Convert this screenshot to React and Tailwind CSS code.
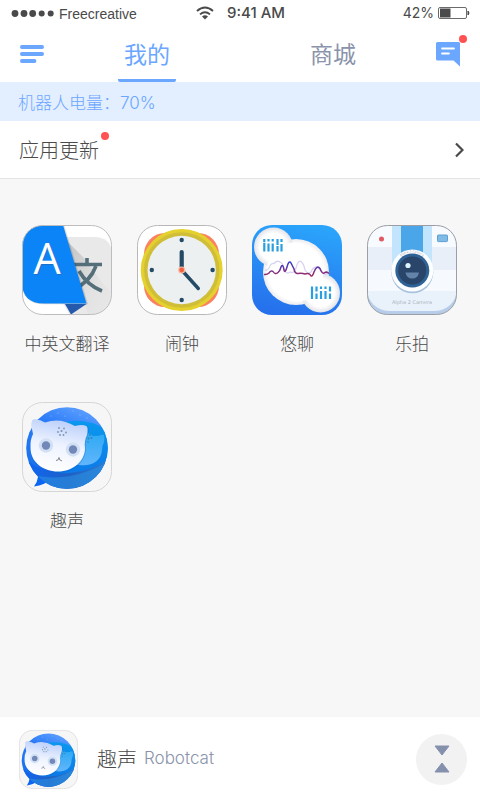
import { useId, useState } from 'react';

const TranslateIcon = ({ className }) => {
  const id = useId();
  return (
    <svg viewBox="0 0 90 90" className={className} aria-hidden="true">
      <defs>
        <clipPath id={`${id}-clip`}>
          <rect x="0.5" y="0.5" width="89" height="89" rx="20" />
        </clipPath>
        <linearGradient id={`${id}-fold`} x1="0" y1="0" x2="1" y2="1">
          <stop offset="0" stopColor="#a9a9a9" />
          <stop offset="0.6" stopColor="#dedede" />
          <stop offset="1" stopColor="#e8e8e8" />
        </linearGradient>
      </defs>
      <g clipPath={`url(#${id}-clip)`}>
        <rect width="90" height="90" fill="#ffffff" />
        <path d="M30 12 H72 Q90 12 90 30 V90 H48 L30 60 Z" fill="#e9e9e9" />
        <path d="M46 17 L62 33 L82 60 L90 68 V90 H66 Z" fill={`url(#${id}-fold)`} opacity="0.6" />
        {/* wen character strokes */}
        <g stroke="#546e7a" strokeWidth="3.6" fill="none">
          <path d="M65 33 V39" />
          <path d="M52 39.5 H80" />
          <path d="M74 41 Q68 57 52 64" />
          <path d="M57 46 Q65 60 80 66" />
        </g>
        <path d="M42.2 0 L66 79.3 H22 Q0 79.3 0 57 V0 Z" fill="#000000" opacity="0.14" />
        <path d="M41 0 L64.5 78.5 H22 Q0 78.5 0 57 V0 Z" fill="#0a84f6" />
        <path d="M43 79 H64.5 L49 89.5 Z" fill="#2559ac" />
        <g textAnchor="middle" fontSize="43" fontWeight="400" fontFamily='"Open Sans", sans-serif'>
          <text x="26" y="50" fill="#2c5f9e" opacity="0.5">
            A
          </text>
          <text x="25" y="49" fill="#ffffff">
            A
          </text>
        </g>
      </g>
      <rect x="0.5" y="0.5" width="89" height="89" rx="20" fill="none" stroke="#bdbdbd" />
    </svg>
  );
};

const ClockIcon = ({ className }) => (
  <svg viewBox="0 0 90 90" className={className} aria-hidden="true">
    <rect x="0.5" y="0.5" width="89" height="89" rx="20" fill="#ffffff" stroke="#b8b8b8" />
    <rect x="7" y="8" width="75" height="74" rx="21" fill="#fb8161" />
    <circle cx="44.7" cy="45" r="41" fill="#e4d12e" />
    <circle cx="44.7" cy="45" r="37.8" fill="#d0be38" />
    <circle cx="44.7" cy="45" r="34.2" fill="#ecf0f1" />
    <g fill="#244a66">
      <circle cx="44.7" cy="15" r="2.2" />
      <circle cx="44.7" cy="75" r="2.2" />
      <circle cx="14.8" cy="45" r="2.2" />
      <circle cx="75.6" cy="45" r="2.2" />
    </g>
    <g stroke="#244a66" strokeLinecap="round">
      <path d="M44.7 27 V44" strokeWidth="4.2" />
      <path d="M46 46.5 L61.3 63.5" strokeWidth="3.4" />
    </g>
    <circle cx="44.7" cy="45" r="3.6" fill="#f9b9a5" />
    <circle cx="44.7" cy="45" r="2.4" fill="#f2643f" />
  </svg>
);

const ChatWaveIcon = ({ className }) => {
  const id = useId();
  return (
    <svg viewBox="0 0 90 90" className={className} aria-hidden="true">
      <defs>
        <linearGradient id={`${id}-bg`} x1="0.6" y1="0" x2="0.4" y2="1">
          <stop offset="0" stopColor="#2aa4fb" />
          <stop offset="1" stopColor="#2670ec" />
        </linearGradient>
        <radialGradient id={`${id}-ball`}>
          <stop offset="0.84" stopColor="#ffffff" />
          <stop offset="1" stopColor="#ececf0" />
        </radialGradient>
        <radialGradient id={`${id}-small`}>
          <stop offset="0.7" stopColor="#ffffff" />
          <stop offset="1" stopColor="#e2e3e8" />
        </radialGradient>
        <linearGradient id={`${id}-wave`} gradientUnits="userSpaceOnUse" x1="0" y1="37" x2="0" y2="52">
          <stop offset="0" stopColor="#3340d0" />
          <stop offset="1" stopColor="#a8285c" />
        </linearGradient>
      </defs>
      <rect width="90" height="90" rx="20" fill={`url(#${id}-bg)`} />
      <circle cx="44" cy="47" r="33" fill={`url(#${id}-ball)`} />
      <circle cx="21.5" cy="22" r="19.5" fill={`url(#${id}-small)`} />
      <circle cx="68.5" cy="68" r="19.5" fill={`url(#${id}-small)`} />
      {/* hides the rims where the three balls join */}
      <path d="M22 12 L35 19 Q50 14 62 27 Q76 40 70 54 L82 66 L68 80 L54 75 Q40 80 28 70 Q12 58 16 36 L10 26 Z" fill="#ffffff" />
      <path
        d="M13 45 Q15 46 17 43 Q19 38 22 38.5 Q25 35 28 37 Q31 38 32 44 Q34 50 38 47 Q42 49 44 43 Q46 35 49 36.5 Q52 39 53 45 Q56 50 59 47 Q61 42 65 42 Q68 44 71 48 Q74 51 77 47"
        fill="none"
        stroke="#d9d3f1"
        strokeWidth="1.3"
      />
      <path
        d="M12 49.5 Q15 50 17 48 Q19 45 21 46.5 Q23 50 26 47.5 Q28 46 29 42 Q31 38 32 45 Q33 49 35 42 Q37 34.5 39 38 Q41 42 42 44 Q43 49 46 48.5 Q50 48 53 49 Q56 48 58 49.5 Q60 53.5 62 47 Q65 39.5 68 43.5 Q70 49 72 48 Q75 46 77 48.5"
        fill="none"
        stroke={`url(#${id}-wave)`}
        strokeWidth="1.5"
      />
      <g fill="none" stroke="#2b9ede" strokeWidth="2.2">
        <path d="M12.3 14 V26.5" strokeDasharray="3 0.8 9" />
        <path d="M16.5 14 V26.5" strokeDasharray="2.4 2 9" />
        <path d="M20.7 14 V26.5" strokeDasharray="2.4 2 9" />
        <path d="M25.5 14 V26.5" strokeDasharray="6 1 6" />
        <path d="M29.5 14 V26.5" strokeDasharray="3 2 9" />
        <path d="M60 61.5 V74" />
        <path d="M64.5 61.5 V74" strokeDasharray="5 2 6" />
        <path d="M69 61.5 V74" strokeDasharray="2.4 2 9" />
        <path d="M73.5 61.5 V74" strokeDasharray="2.4 2 9" />
        <path d="M78 61.5 V74" strokeDasharray="5 2 6" />
      </g>
    </svg>
  );
};

const CameraIcon = ({ className }) => {
  const id = useId();
  return (
    <svg viewBox="0 0 90 90" className={className} aria-hidden="true">
      <defs>
        <clipPath id={`${id}-clip`}>
          <rect x="0.5" y="0.5" width="89" height="89" rx="20" />
        </clipPath>
        <path id={`${id}-arc`} d="M27.5 45 A17.5 17.5 0 0 1 62.5 45" />
      </defs>
      <g clipPath={`url(#${id}-clip)`}>
        <rect width="90" height="90" fill="#b7cdea" />
        <rect y="-20" width="90" height="106" rx="22" fill="#e9f1fb" />
        <rect width="90" height="22" fill="#f7fafe" />
        <rect y="22" width="90" height="23" fill="#e9eff8" />
        <rect y="45" width="90" height="21" fill="#f6f9fe" />
        <rect x="25" width="40" height="45" fill="#c2e4fd" />
        <rect x="34" width="22" height="35" fill="#4ba5e9" />
        <circle cx="14.5" cy="14" r="2.5" fill="#e05a62" />
        <rect x="70.5" y="10" width="10" height="6.6" rx="0.8" fill="#7fbbe4" stroke="#5e9fd2" />
        <circle cx="45.3" cy="47.3" r="21" fill="#a9c2dd" />
        <circle cx="45.3" cy="45.5" r="21" fill="#fdfeff" />
        <circle cx="45.3" cy="45.5" r="17" fill="#2f6295" />
        <circle cx="45.3" cy="45.5" r="14" fill="#29456a" />
        <circle cx="41" cy="40.5" r="2.6" fill="#ddf3ff" />
        <path d="M38.5 47.5 H52 Q51 53.5 45.3 53.5 Q39.5 53.5 38.5 47.5 Z" fill="#6483a8" />
        <g fill="#aeb4be" fontWeight="400" fontFamily='"DejaVu Sans", sans-serif'>
          <text fontSize="3">
            <textPath href={`#${id}-arc`} startOffset="50%" textAnchor="middle">
              Alpha 2 Camera
            </textPath>
          </text>
          <text x="45" y="79" textAnchor="middle" fontSize="5">
            Alpha 2 Camera
          </text>
        </g>
      </g>
      <rect x="0.5" y="0.5" width="89" height="89" rx="20" fill="none" stroke="#9b9fa5" />
    </svg>
  );
};

const CatIcon = ({ className }) => {
  const id = useId();
  return (
    <svg viewBox="0 0 90 90" className={className} aria-hidden="true">
      <defs>
        <linearGradient id={`${id}-ball`} x1="0.7" y1="0" x2="0.3" y2="1">
          <stop offset="0" stopColor="#5ea0ff" />
          <stop offset="0.3" stopColor="#2b7cf8" />
          <stop offset="1" stopColor="#146fea" />
        </linearGradient>
        <linearGradient id={`${id}-sea`} x1="0" y1="0" x2="0" y2="1">
          <stop offset="0" stopColor="#0a98ee" />
          <stop offset="1" stopColor="#0b7ae8" />
        </linearGradient>
        <linearGradient id={`${id}-deep`} x1="0" y1="0" x2="1" y2="0">
          <stop offset="0" stopColor="#0d66f5" />
          <stop offset="0.5" stopColor="#2060c4" />
          <stop offset="1" stopColor="#2a80d8" />
        </linearGradient>
        <linearGradient id={`${id}-back`} x1="0" y1="0" x2="0" y2="1">
          <stop offset="0" stopColor="#2ba9f3" />
          <stop offset="1" stopColor="#62b6fb" />
        </linearGradient>
        <linearGradient id={`${id}-face`} x1="0.6" y1="0" x2="0.4" y2="1">
          <stop offset="0" stopColor="#b9cefb" />
          <stop offset="0.5" stopColor="#eef3ff" />
          <stop offset="1" stopColor="#ffffff" />
        </linearGradient>
        <clipPath id={`${id}-clip`}>
          <circle cx="45" cy="46" r="40.8" />
        </clipPath>
      </defs>
      <rect x="0.5" y="0.5" width="89" height="89" rx="20" fill="#f6f6f6" stroke="#d6d6d6" />
      <path d="M14 66 Q19 75 12 84.5 Q23 83 29 77 Z" fill="#0b66f3" />
      <circle cx="45" cy="46" r="40.8" fill={`url(#${id}-ball)`} />
      <g clipPath={`url(#${id}-clip)`}>
        <path d="M36 22 Q66 12 90 32 V72 H36 Z" fill={`url(#${id}-sea)`} />
        <path d="M4 58 Q24 73 48 71 Q72 69 90 54 V90 H4 Z" fill={`url(#${id}-deep)`} />
        <path d="M16 74 Q50 80 86 60 L66 90 H26 Z" fill="#2c8fe0" opacity="0.6" />
      </g>
      <path d="M58 31 Q66 29 71 34 Q77 34 81 32.5 Q83 33 82 40 Q80 44 80 48 C79 60 68 66 52 62 Z" fill={`url(#${id}-back)`} />
      <g fill="#a8cbff" opacity="0.8">
        <circle cx="29" cy="14" r="0.6" />
        <circle cx="36" cy="11" r="0.6" />
        <circle cx="43" cy="14" r="0.6" />
        <circle cx="51" cy="9" r="0.6" />
        <circle cx="58" cy="13" r="0.6" />
        <circle cx="65" cy="16" r="0.6" />
      </g>
      <g fill="#3a7fb4">
        <circle cx="68" cy="33" r="0.9" />
        <circle cx="66.5" cy="36.5" r="1" />
        <circle cx="69.5" cy="36" r="0.9" />
        <circle cx="66" cy="40" r="0.8" />
      </g>
      <path
        d="M12 17.5 Q18 17 23 20.5 Q38 15 53 24 Q60 22 65.5 24 Q67.5 26 66 33 Q63 39 64 46 C64 60 52 71 37 71 C21 71 8 62 8 46 Q8 38 11 32 Q9 24 10 19 Q10.5 17.5 12 17.5 Z"
        fill="#0655c2"
        opacity="0.25"
      />
      <path
        d="M12 17.5 Q18 17 23 20.5 Q38 15 53 24 Q60 22 64.5 24 Q66.5 26 65 33 Q62 39 63 46 C63 59 51 69.5 36 69.5 C21 69.5 8.5 60 8.5 46 Q8 38 11 32 Q9 24 10 19 Q10.5 17.5 12 17.5 Z"
        fill={`url(#${id}-face)`}
      />
      <g fill="#7b93b2">
        <circle cx="37" cy="26" r="0.9" />
        <circle cx="42" cy="26.5" r="0.9" />
        <circle cx="39.5" cy="29" r="1.1" />
        <circle cx="36" cy="30" r="0.9" />
        <circle cx="44" cy="30.5" r="0.9" />
        <circle cx="38" cy="33" r="0.9" />
        <circle cx="41.5" cy="33" r="0.9" />
      </g>
      <circle cx="24" cy="43.5" r="7.2" fill="#d2e0f3" />
      <circle cx="24" cy="43.5" r="4.2" fill="#7188b8" />
      <circle cx="51" cy="47.5" r="7.2" fill="#d2e0f3" />
      <circle cx="51" cy="47.5" r="4.2" fill="#7188b8" />
      <path d="M34 58.5 Q37 58.5 37 55.5 Q37 58.5 40 59" fill="none" stroke="#74787f" strokeWidth="0.9" />
    </svg>
  );
};

const apps = [
  { name: '中英文翻译', Icon: TranslateIcon },
  { name: '闹钟', Icon: ClockIcon },
  { name: '悠聊', Icon: ChatWaveIcon },
  { name: '乐拍', Icon: CameraIcon },
  { name: '趣声', Icon: CatIcon },
];

const tabs = ['我的', '商城'];

const StatusBar = () => (
  <div className="grid h-7 grid-cols-[1fr_auto_1fr] items-center pr-[10px] pl-[11px] text-[#4a4a4a]">
    <div className="flex items-center gap-1">
      <svg viewBox="0 0 44 8" className="h-2 w-11" fill="currentColor" aria-hidden="true">
        <circle cx="4" cy="3.5" r="3.4" />
        <circle cx="13" cy="3.5" r="3.4" />
        <circle cx="21.7" cy="3.5" r="3.4" />
        <circle cx="30.7" cy="3.5" r="3" />
        <circle cx="39.7" cy="3.5" r="3" />
      </svg>
      <span className="font-['Liberation_Sans',sans-serif] text-sm font-normal">Freecreative</span>
    </div>
    <div className="flex items-center gap-[13px] pb-[2px]">
      <svg viewBox="0 0 18 14" className="h-[14px] w-[18px]" fill="none" stroke="currentColor" strokeWidth="1.9" aria-hidden="true">
        <path d="M1 5 Q9 -2 17 5" />
        <path d="M4 8.4 Q9 4 14 8.4" />
        <path d="M6 10.5 Q9 7.8 12 10.5 L9 13.5 Z" fill="currentColor" stroke="none" />
      </svg>
      <span className="text-[15px] font-medium">9:41 AM</span>
    </div>
    <div className="flex items-center justify-end gap-1 pb-[2px]">
      <span className="text-sm font-normal">42%</span>
      <svg viewBox="0 0 32 12" className="h-3 w-8" aria-hidden="true">
        <rect x="0.5" y="0.5" width="28" height="11" rx="1.5" fill="none" stroke="#6a6a6a" />
        <rect x="2" y="1.5" width="10.5" height="9" fill="#4a4a4a" />
        <path d="M30 4 Q32 6 30 8 Z" fill="#4a4a4a" stroke="#4a4a4a" />
      </svg>
    </div>
  </div>
);

const Header = () => {
  const [active, setActive] = useState(tabs[0]);

  return (
    <header className="flex h-[54px] items-center px-5">
      <button type="button" aria-label="菜单">
        <svg viewBox="0 0 24 20" className="h-5 w-6" stroke="#6ba6ff" strokeWidth="3.8" strokeLinecap="round" aria-hidden="true">
          <path d="M1.9 2 H22.1 M1.9 9 H22.1 M1.9 16 H14.5" />
        </svg>
      </button>
      <nav className="mx-[10px] grid h-full flex-1 grid-cols-2 justify-items-center">
        {tabs.map((tab) => (
          <button
            key={tab}
            type="button"
            onClick={() => setActive(tab)}
            className={
              tab === active
                ? 'h-full w-[58px] rounded-xs border-b-3 border-[#6ba6ff] pt-[3px] text-[23px] font-normal text-[#6ba6ff]'
                : 'h-full w-[58px] rounded-xs border-b-3 border-transparent pt-[3px] text-[23px] font-normal text-[#8a93ab]'
            }
          >
            {tab}
          </button>
        ))}
      </nav>
      <button type="button" aria-label="消息" className="relative">
        <svg viewBox="0 0 24 26" className="h-[26px] w-6" aria-hidden="true">
          <path d="M1.5 0 H22.5 Q24 0 24 1.5 V24.5 L17.5 18.5 H1.5 Q0 18.5 0 17 V1.5 Q0 0 1.5 0 Z" fill="#6ba6ff" />
          <path d="M6.2 6.5 H17.8 M6.2 11.5 H12.8" stroke="#ffffff" strokeWidth="2.2" strokeLinecap="round" />
        </svg>
        <span className="absolute -top-[7px] -right-[7px] h-2 w-2 rounded-full bg-[#ff5252]" />
      </button>
    </header>
  );
};

const App = () => {
  return (
    <div className="flex min-h-screen flex-col bg-[#f7f7f7] font-[Inter,'Noto_Sans_CJK_SC',sans-serif] font-light text-[#4a4a4a]">
      <div className="bg-white">
        <StatusBar />
        <Header />
        <p className="bg-[#e3efff] px-[18px] pt-[9px] pb-[6px] text-[17px] leading-6 text-[#6ba6ff]">机器人电量：70%</p>
        <a href="#updates" className="flex h-[58px] items-center justify-between border-b border-[#e4e4e4] pr-4 pl-[19px]">
          <span className="relative pt-[2px] text-xl">
            应用更新
            <span className="absolute -top-[3px] -right-[10px] h-2 w-2 rounded-full bg-[#ff5252]" />
          </span>
          <svg viewBox="0 0 9 16" className="h-4 w-[9px]" fill="none" stroke="#4a4a4a" strokeWidth="2.2" aria-hidden="true">
            <path d="M1 1.5 L7.5 8 L1 14.5" />
          </svg>
        </a>
      </div>

      <main className="flex-1">
        <ul className="grid grid-cols-4 gap-x-[25px] gap-y-[46px] pt-[46px] pr-[23px] pl-[22px]">
          {apps.map(({ name, Icon }) => (
            <li key={name}>
              <a href={`#${name}`} className="flex flex-col items-center gap-[17px]">
                <Icon className="h-[90px] w-[90px]" />
                <span className="text-[17px] leading-6 whitespace-nowrap">{name}</span>
              </a>
            </li>
          ))}
        </ul>
      </main>

      <footer className="flex h-[83px] items-center bg-white pt-px pr-[13px] pl-[19px]">
        <CatIcon className="h-[59px] w-[59px]" />
        <span className="ml-[19px] pt-[2px] text-xl">趣声</span>
        <span className="ml-[7px] text-[17px] text-[#8a93ab]">Robotcat</span>
        <button type="button" aria-label="收起" className="ml-auto flex h-[51px] w-[51px] items-center justify-center rounded-full bg-[#f2f2f2]">
          <svg viewBox="0 0 16 28" className="h-7 w-4" fill="#8590ad" stroke="#8590ad" strokeLinejoin="round" aria-hidden="true">
            <path d="M1 1 H15 L8 10 Z M1 27 H15 L8 18 Z" />
          </svg>
        </button>
      </footer>
    </div>
  );
};

export default App;
